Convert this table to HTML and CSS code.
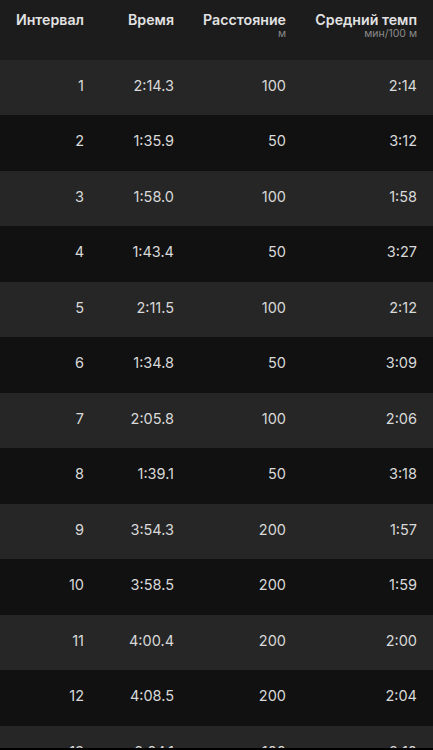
FILE: index.html
```html
<!DOCTYPE html>
<html lang="ru">
<head>
<meta charset="utf-8">
<link rel="stylesheet" href="styles.css">
</head>
<body>
<div class="screen">
  <div class="head">
    <div class="hc"><span class="ht">Интервал</span></div>
    <div class="hc"><span class="ht">Время</span></div>
    <div class="hc"><span class="ht">Расстояние</span><span class="hs">м</span></div>
    <div class="hc"><span class="ht">Средний темп</span><span class="hs">мин/100 м</span></div>
  </div>
  <div class="row light"><span>1</span><span>2:14.3</span><span>100</span><span>2:14</span></div>
  <div class="row dark"><span>2</span><span>1:35.9</span><span>50</span><span>3:12</span></div>
  <div class="row light"><span>3</span><span>1:58.0</span><span>100</span><span>1:58</span></div>
  <div class="row dark"><span>4</span><span>1:43.4</span><span>50</span><span>3:27</span></div>
  <div class="row light"><span>5</span><span>2:11.5</span><span>100</span><span>2:12</span></div>
  <div class="row dark"><span>6</span><span>1:34.8</span><span>50</span><span>3:09</span></div>
  <div class="row light"><span>7</span><span>2:05.8</span><span>100</span><span>2:06</span></div>
  <div class="row dark"><span>8</span><span>1:39.1</span><span>50</span><span>3:18</span></div>
  <div class="row light"><span>9</span><span>3:54.3</span><span>200</span><span>1:57</span></div>
  <div class="row dark"><span>10</span><span>3:58.5</span><span>200</span><span>1:59</span></div>
  <div class="row light"><span>11</span><span>4:00.4</span><span>200</span><span>2:00</span></div>
  <div class="row dark"><span>12</span><span>4:08.5</span><span>200</span><span>2:04</span></div>
  <div class="row light"><span>13</span><span>2:04.1</span><span>100</span><span>2:10</span></div>
</div>
</body>
</html>
```
FILE: styles.css
```css
html, body {
  margin: 0;
  padding: 0;
  background: #000;
}
.screen {
  width: 433px;
  height: 748px;
  overflow: hidden;
  background: #111;
  font-family: Inter, Roboto, "Liberation Sans", sans-serif;
}
.head, .row {
  display: grid;
  grid-template-columns: 84px 90px 112px 131px;
  padding-right: 16px;
}
.head {
  height: 59.5px;
  background: #1c1c1c;
  box-sizing: border-box;
  padding-top: 10.5px;
}
.hc {
  display: flex;
  flex-direction: column;
  align-items: flex-end;
}
.ht {
  font-size: 14.2px;
  font-weight: 600;
  color: #e2e2e2;
  line-height: 17px;
  white-space: nowrap;
}
.hs {
  font-size: 10.5px;
  color: #8a8a8a;
  line-height: 12px;
  margin-top: 0;
  white-space: nowrap;
}
.row {
  height: 55.5px;
  align-items: center;
  box-sizing: border-box;
  padding-bottom: 4px;
  font-size: 14.5px;
  color: #d9d9d9;
}
.row span {
  text-align: right;
}
.light { background: #262626; }
.dark { background: #111; }
```
